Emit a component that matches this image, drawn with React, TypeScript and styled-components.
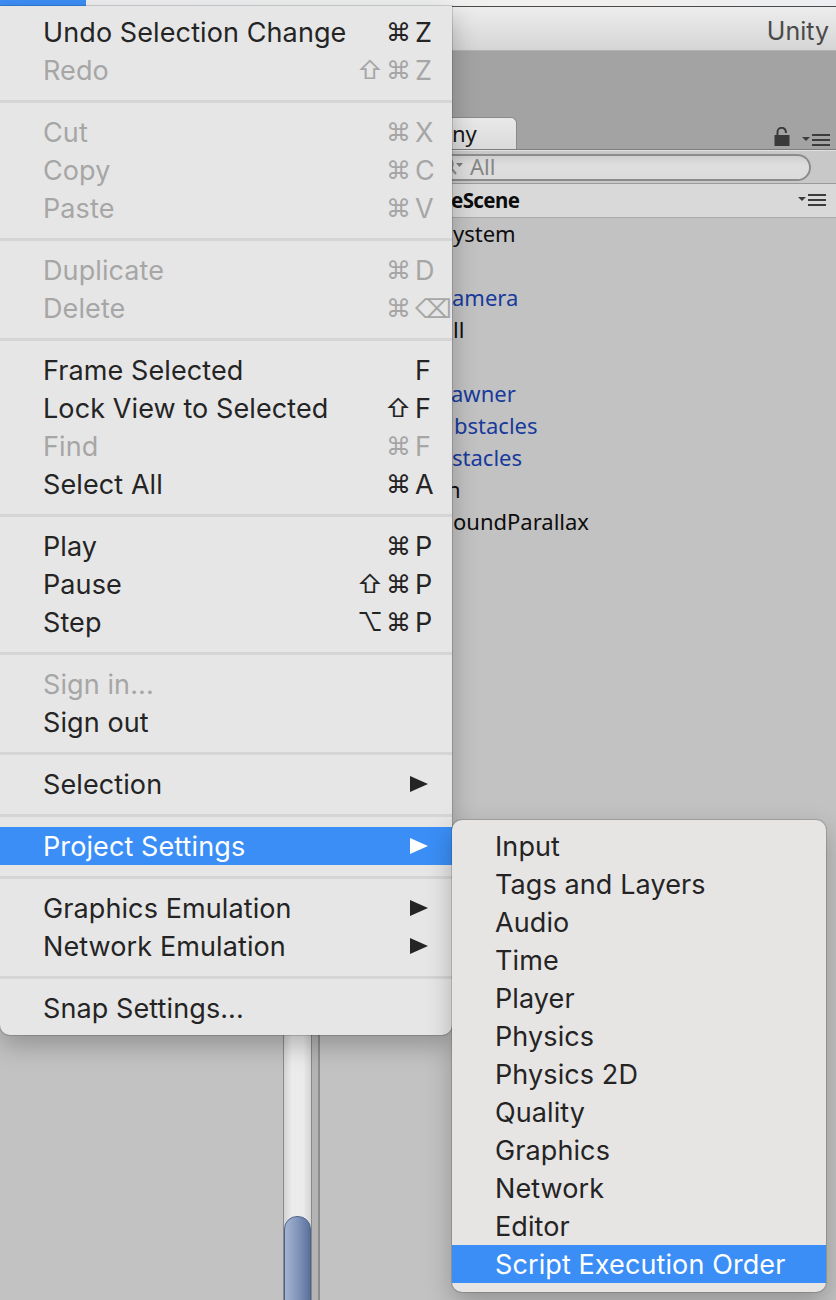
import React from "react";
import styled, { createGlobalStyle } from "styled-components";

const Global = createGlobalStyle`
  html, body { margin: 0; padding: 0; }
  body {
    width: 836px;
    height: 1300px;
    overflow: hidden;
    background: #c2c2c2;
    font-family: Inter, "Noto Sans", sans-serif;
  }
`;

const Screen = styled.div`
  position: relative;
  width: 836px;
  height: 1300px;
  overflow: hidden;
  display: flex;
  flex-direction: column;
  background: #c2c2c2;
`;

/* ---------- background editor ---------- */

const SystemBar = styled.div`
  flex: 0 0 6px;
  display: flex;
  background: linear-gradient(90deg, #f1eff3, #eef1f0 45%, #f2f0ee 70%, #eceef1);
`;

const SystemBarActive = styled.div`
  width: 86px;
  background: #3d8ef6;
`;

const TitleBar = styled.div`
  flex: 0 0 45px;
  display: flex;
  align-items: center;
  justify-content: flex-end;
  padding: 5px 7px 0 0;
  box-sizing: border-box;
  border-top: 1px solid #4b4b4b;
  border-bottom: 1px solid #b2b2b2;
  background: linear-gradient(#ededed, #d5d5d5);
  font-family: Inter, "Noto Sans", sans-serif;
  font-size: 25px;
  color: #4a4a4a;
`;

const Toolbar = styled.div`
  flex: 0 0 66px;
  background: #a3a3a3;
`;

const Panels = styled.div`
  flex: 1;
  display: flex;
  min-height: 0;
`;

const LeftPane = styled.div`
  flex: 0 0 440px;
  display: flex;
  background: #c2c2c2;
`;

const LeftContent = styled.div`
  flex: 0 0 283px;
  background: #c2c2c2;
`;

const ScrollTrack = styled.div`
  flex: 0 0 27px;
  display: flex;
  flex-direction: column;
  border-left: 1px solid #8a8a8a;
  background: linear-gradient(90deg, #d2d2d2, #ececec 30%, #ebebeb 70%, #d4d4d4);
  overflow: hidden;
`;

const ScrollThumb = styled.div`
  margin-top: auto;
  margin-bottom: -30px;
  height: 114px;
  border: 1px solid #4d628a;
  border-radius: 13px;
  background: linear-gradient(90deg, #a3b3d0, #8a9dc0 40%, #6a80a8 80%, #5a7099);
  box-sizing: border-box;
`;

const ScrollEdge = styled.div`
  flex: 0 0 6px;
  border-left: 1px solid #888888;
  border-right: 2px solid #8d8d8d;
  background: #b4b4b4;
`;

const HierarchyPane = styled.div`
  flex: 1;
  display: flex;
  flex-direction: column;
  min-width: 0;
  background: #c2c2c2;
  font-family: "Noto Sans", "DejaVu Sans", sans-serif;
`;

const TabStrip = styled.div`
  flex: 0 0 33px;
  display: flex;
  align-items: flex-end;
  box-sizing: border-box;
  background: #a3a3a3;
  border-bottom: 1px solid #7e7e7e;
`;

const Tab = styled.div`
  width: 77px;
  height: 32px;
  display: flex;
  align-items: center;
  padding: 0 0 2px 12px;
  box-sizing: border-box;
  background: linear-gradient(#e9e9e9, #dadada);
  border: 1px solid #8a8a8a;
  border-left: 0;
  border-bottom: 0;
  border-top-right-radius: 6px;
  font-size: 22px;
  color: #151515;
`;

const TabTools = styled.div`
  margin-left: auto;
  display: flex;
  align-items: flex-end;
  gap: 12px;
  padding: 0 6px 3px 0;
`;

const SearchRow = styled.div`
  flex: 0 0 33px;
  display: flex;
  align-items: center;
  box-sizing: border-box;
  background: #c8c8c8;
  border-top: 1px solid #e0e0e0;
`;

const SearchField = styled.div`
  width: 371px;
  height: 27px;
  display: flex;
  align-items: center;
  gap: 0;
  padding: 0 0 2px 4px;
  box-sizing: border-box;
  border: 2px solid #8c8c8c;
  border-left: 0;
  border-radius: 0 15px 15px 0;
  background: linear-gradient(#cfcfcf, #dedede 40%, #dcdcdc);
  font-size: 22px;
  color: #858585;
`;

const SceneHeader = styled.div`
  flex: 0 0 35px;
  display: flex;
  align-items: center;
  padding: 0 10px 2px 11px;
  box-sizing: border-box;
  border-top: 1px solid #9a9a9a;
  border-bottom: 1px solid #a9a9a9;
  background: #d9d9d9;
  font-size: 20.5px;
  font-weight: 700;
  letter-spacing: -0.6px;
  color: #0c0c0c;
`;

const HeaderTools = styled.div`
  margin-left: auto;
  display: flex;
`;

const HierList = styled.div`
  display: flex;
  flex-direction: column;
`;

const HierRow = styled.div<{ $blue?: boolean; $shift: number }>`
  height: 32px;
  display: flex;
  align-items: center;
  padding: 0 0 3px ${(p) => 13 + p.$shift}px;
  box-sizing: border-box;
  white-space: nowrap;
  font-size: 22px;
  color: ${(p) => (p.$blue ? "#173a9c" : "#0d0d0d")};
`;

/* ---------- menus ---------- */

const MainMenu = styled.div`
  position: absolute;
  left: 0;
  top: 6px;
  width: 452px;
  padding: 7px 0 8px;
  box-sizing: border-box;
  background: #e6e6e6;
  border-radius: 0 0 10px 10px;
  box-shadow: 0 10px 26px rgba(0, 0, 0, 0.25), 0 0 0 1px rgba(0, 0, 0, 0.14);
  font-family: Inter, "Noto Sans", sans-serif;
`;

const SubMenu = styled.div`
  position: absolute;
  left: 452px;
  top: 820px;
  width: 374px;
  padding: 7px 0 9px;
  box-sizing: border-box;
  background: #e7e4e4;
  border-radius: 10px;
  box-shadow: 0 10px 26px rgba(0, 0, 0, 0.25), 0 0 0 1px rgba(0, 0, 0, 0.14);
  font-family: Inter, "Noto Sans", sans-serif;
`;

const MenuRow = styled.div<{ $active?: boolean; $disabled?: boolean }>`
  height: 38px;
  display: flex;
  align-items: center;
  padding: 0 6px 0 43px;
  font-size: 27px;
  letter-spacing: 0.1px;
  white-space: nowrap;
  color: ${(p) => (p.$active ? "#ffffff" : p.$disabled ? "#a6a6a6" : "#242424")};
  background: ${(p) => (p.$active ? "#3a8ef6" : "transparent")};
`;

const MenuLabel = styled.span`
  flex: 1;
`;

const Mods = styled.span`
  display: flex;
  gap: 3px;
  margin-right: 4px;
`;

const Mod = styled.span`
  font-family: Inter, "DejaVu Sans", sans-serif;
  font-size: 25px;
`;

const Key = styled.span`
  width: 31px;
  text-align: left;
`;

const KeyGlyph = styled.span`
  font-family: "DejaVu Sans", sans-serif;
  font-size: 26px;
`;

const Arrow = styled.span`
  width: 0;
  height: 0;
  margin-right: 18px;
  border-left: 18px solid currentColor;
  border-top: 8.5px solid transparent;
  border-bottom: 8.5px solid transparent;
`;

const Separator = styled.div`
  height: 24px;
  display: flex;
  align-items: center;
  &::after {
    content: "";
    flex: 1;
    height: 3px;
    background: #d5d5d5;
  }
`;

/* ---------- icons ---------- */

const LockIcon = () => (
  <svg width="16" height="19" viewBox="0 0 16 19">
    <path d="M3.5 8 V5 a4.2 4.2 0 0 1 8.4 0 V6" fill="none" stroke="#3a3a3a" strokeWidth="2" />
    <rect x="0.5" y="8" width="15" height="11" fill="#3a3a3a" />
  </svg>
);

const PaneMenuIcon = () => (
  <svg width="28" height="12" viewBox="0 0 28 12">
    <path d="M0 3 H8 L4 7 Z" fill="#3c3c3c" />
    <rect x="10" y="0" width="18" height="2" fill="#3c3c3c" />
    <rect x="10" y="5" width="18" height="2" fill="#3c3c3c" />
    <rect x="10" y="10" width="18" height="2" fill="#3c3c3c" />
  </svg>
);

const SearchIcon = () => (
  <svg width="26" height="20" viewBox="0 0 26 20">
    <circle cx="3" cy="8" r="6" fill="none" stroke="#8a8a8a" strokeWidth="1.6" />
    <path d="M7 12 L12 18" stroke="#8a8a8a" strokeWidth="2" />
    <path d="M12 7 H19 L15.5 11 Z" fill="#7a7a7a" />
  </svg>
);

/* ---------- data ---------- */

type Entry =
  | { sep: true }
  | {
      sep?: false;
      label: string;
      mods?: string[];
      keyChar?: string;
      glyphKey?: boolean;
      disabled?: boolean;
      sub?: boolean;
      active?: boolean;
    };

const editMenu: Entry[] = [
  { label: "Undo Selection Change", mods: ["⌘"], keyChar: "Z" },
  { label: "Redo", mods: ["⇧", "⌘"], keyChar: "Z", disabled: true },
  { sep: true },
  { label: "Cut", mods: ["⌘"], keyChar: "X", disabled: true },
  { label: "Copy", mods: ["⌘"], keyChar: "C", disabled: true },
  { label: "Paste", mods: ["⌘"], keyChar: "V", disabled: true },
  { sep: true },
  { label: "Duplicate", mods: ["⌘"], keyChar: "D", disabled: true },
  { label: "Delete", mods: ["⌘"], keyChar: "⌫", glyphKey: true, disabled: true },
  { sep: true },
  { label: "Frame Selected", keyChar: "F" },
  { label: "Lock View to Selected", mods: ["⇧"], keyChar: "F" },
  { label: "Find", mods: ["⌘"], keyChar: "F", disabled: true },
  { label: "Select All", mods: ["⌘"], keyChar: "A" },
  { sep: true },
  { label: "Play", mods: ["⌘"], keyChar: "P" },
  { label: "Pause", mods: ["⇧", "⌘"], keyChar: "P" },
  { label: "Step", mods: ["⌥", "⌘"], keyChar: "P" },
  { sep: true },
  { label: "Sign in...", disabled: true },
  { label: "Sign out" },
  { sep: true },
  { label: "Selection", sub: true },
  { sep: true },
  { label: "Project Settings", sub: true, active: true },
  { sep: true },
  { label: "Graphics Emulation", sub: true },
  { label: "Network Emulation", sub: true },
  { sep: true },
  { label: "Snap Settings..." },
];

const projectSettings = [
  "Input",
  "Tags and Layers",
  "Audio",
  "Time",
  "Player",
  "Physics",
  "Physics 2D",
  "Quality",
  "Graphics",
  "Network",
  "Editor",
  "Script Execution Order",
];

/* visible tails of the hierarchy names; the rest lies under the open menu */
const hierarchy = [
  { text: "ystem", blue: false, shift: 0 },
  { text: "", blue: true, shift: 0 },
  { text: "amera", blue: true, shift: -1 },
  { text: "ll", blue: false, shift: 0 },
  { text: "", blue: false, shift: 0 },
  { text: "awner", blue: true, shift: -2 },
  { text: "bstacles", blue: true, shift: 1 },
  { text: "stacles", blue: true, shift: -1 },
  { text: "n", blue: false, shift: -6 },
  { text: "oundParallax", blue: false, shift: 0 },
];

const renderEntry = (e: Entry, i: number) => {
  if (e.sep) return <Separator key={i} />;
  return (
    <MenuRow key={i} $active={e.active} $disabled={e.disabled}>
      <MenuLabel>{e.label}</MenuLabel>
      {e.sub ? (
        <Arrow />
      ) : e.keyChar ? (
        <>
          <Mods>
            {(e.mods ?? []).map((m, j) => (
              <Mod key={j}>{m}</Mod>
            ))}
          </Mods>
          <Key>{e.glyphKey ? <KeyGlyph>{e.keyChar}</KeyGlyph> : e.keyChar}</Key>
        </>
      ) : null}
    </MenuRow>
  );
};

export default function App() {
  return (
    <>
      <Global />
      <Screen>
        <SystemBar>
          <SystemBarActive />
        </SystemBar>
        <TitleBar>Unity</TitleBar>
        <Toolbar />
        <Panels>
          <LeftPane>
            <LeftContent />
            <ScrollTrack>
              <ScrollThumb />
            </ScrollTrack>
            <ScrollEdge />
          </LeftPane>
          <HierarchyPane>
            <TabStrip>
              <Tab>ny</Tab>
              <TabTools>
                <LockIcon />
                <PaneMenuIcon />
              </TabTools>
            </TabStrip>
            <SearchRow>
              <SearchField>
                <SearchIcon />
                <span>All</span>
              </SearchField>
            </SearchRow>
            <SceneHeader>
              <span>eScene</span>
              <HeaderTools>
                <PaneMenuIcon />
              </HeaderTools>
            </SceneHeader>
            <HierList>
              {hierarchy.map((h, i) => (
                <HierRow key={i} $blue={h.blue} $shift={h.shift}>
                  {h.text}
                </HierRow>
              ))}
            </HierList>
          </HierarchyPane>
        </Panels>

        <MainMenu>{editMenu.map(renderEntry)}</MainMenu>
        <SubMenu>
          {projectSettings.map((label, i) => (
            <MenuRow key={label} $active={i === projectSettings.length - 1}>
              <MenuLabel>{label}</MenuLabel>
            </MenuRow>
          ))}
        </SubMenu>
      </Screen>
    </>
  );
}
